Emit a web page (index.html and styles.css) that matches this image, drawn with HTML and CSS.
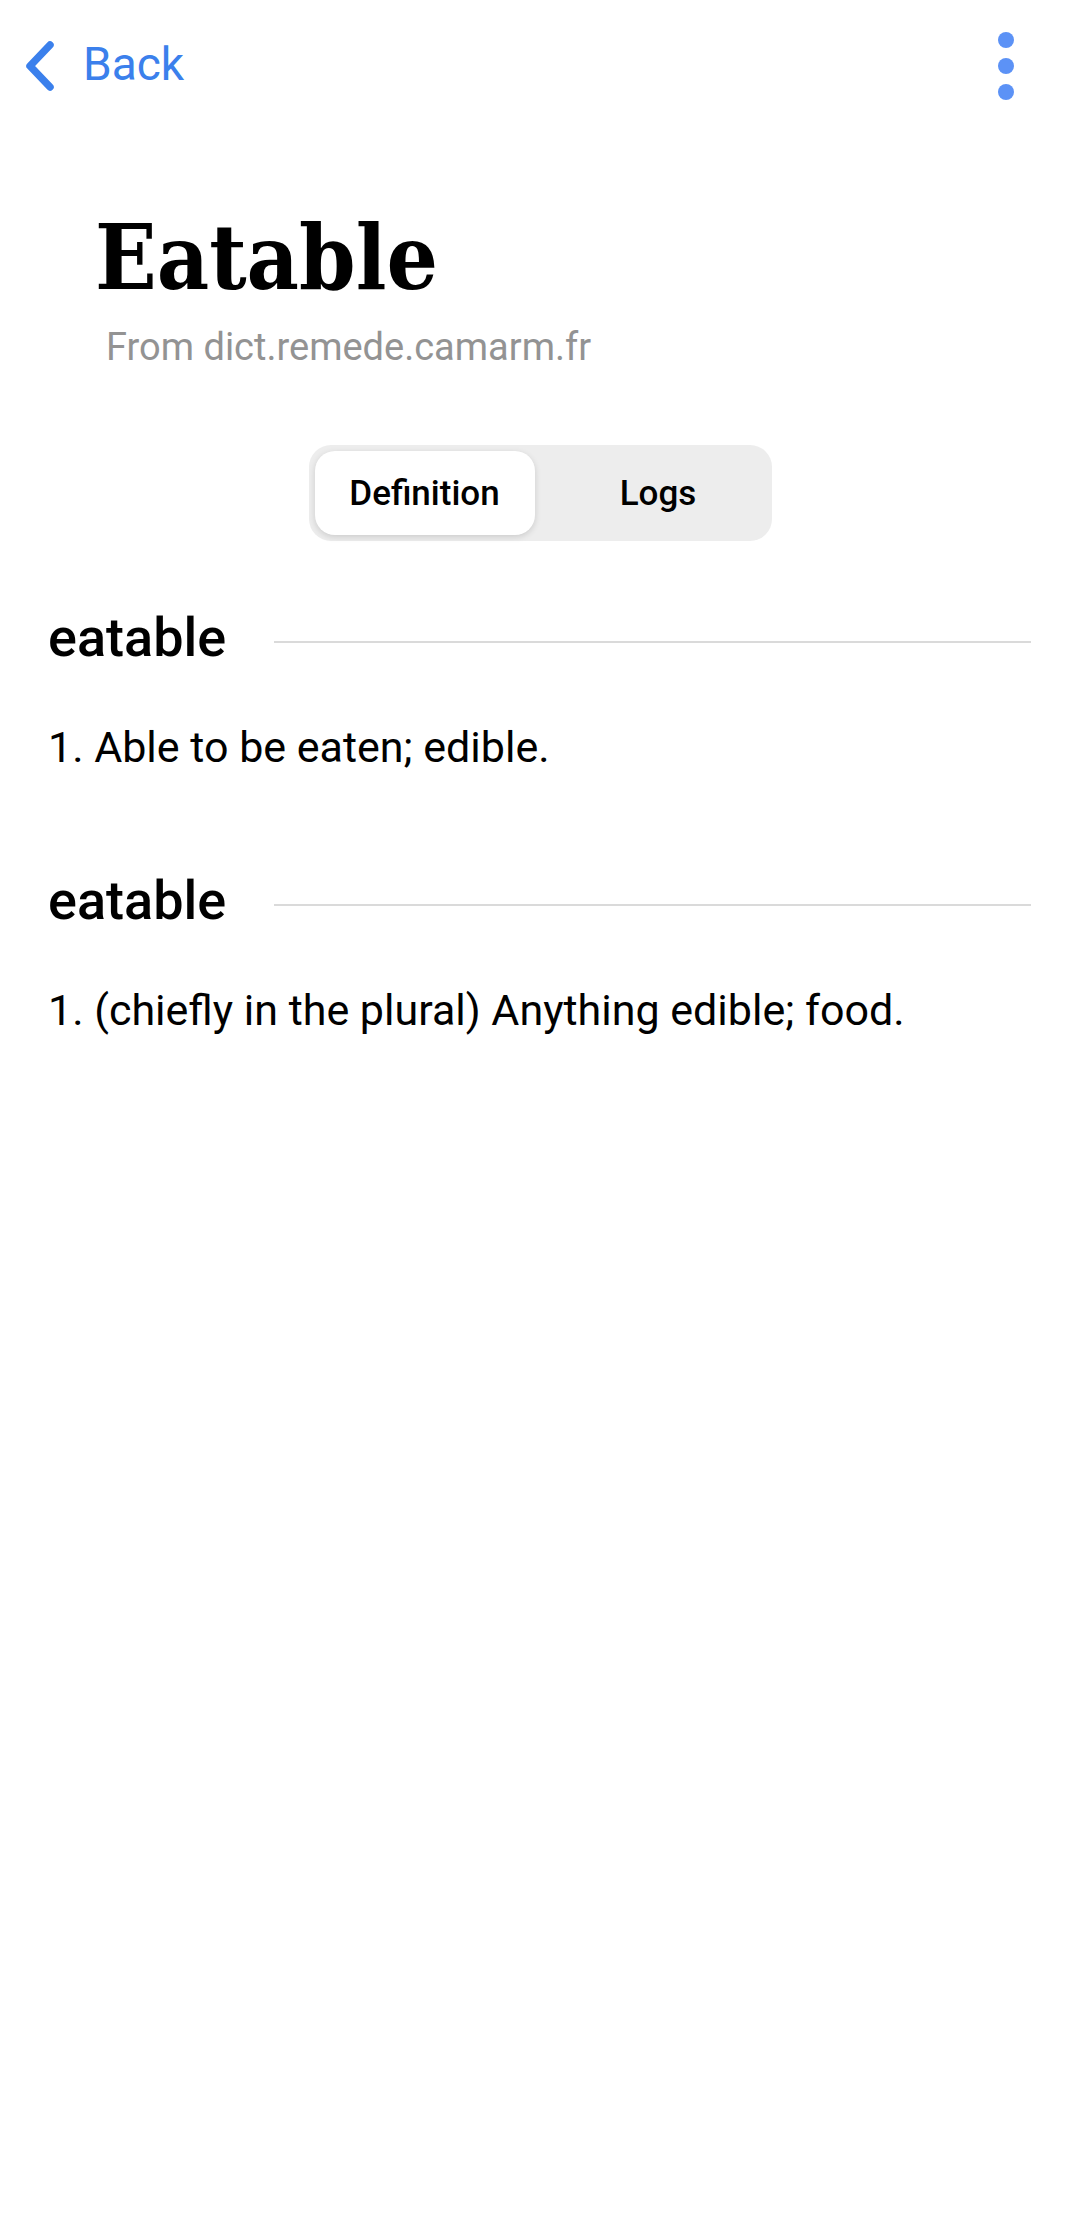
FILE: index.html
```html
<!DOCTYPE html>
<html lang="en">
<head>
<meta charset="utf-8">
<title>Eatable</title>
<link rel="stylesheet" href="styles.css">
</head>
<body>
<div class="app">
  <header class="topbar">
    <a class="back" href="#">
      <svg class="back-icon" width="40" height="66" viewBox="0 0 40 66" aria-hidden="true">
        <path d="M30 13 L10 34 L30 55" fill="none" stroke="#3b80ec" stroke-width="7.5" stroke-linecap="round" stroke-linejoin="round"/>
      </svg>
      <span class="back-label">Back</span>
    </a>
    <svg class="more" width="24" height="80" viewBox="0 0 24 80" aria-hidden="true">
      <circle cx="12" cy="15" r="8" fill="#5c92f6"/>
      <circle cx="12" cy="41" r="8" fill="#5c92f6"/>
      <circle cx="12" cy="67" r="8" fill="#5c92f6"/>
    </svg>
  </header>

  <h1 class="title">Eatable</h1>
  <p class="source">From dict.remede.camarm.fr</p>

  <div class="segmented-wrap">
    <div class="segmented">
      <div class="segment active">Definition</div>
      <div class="segment logs">Logs</div>
    </div>
  </div>

  <main class="content">
    <section class="entry">
      <div class="entry-head">
        <h2 class="headword">eatable</h2>
        <div class="rule"></div>
      </div>
      <p class="def">1. Able to be eaten; edible.</p>
    </section>
    <section class="entry second">
      <div class="entry-head">
        <h2 class="headword">eatable</h2>
        <div class="rule"></div>
      </div>
      <p class="def">1. (chiefly in the plural) Anything edible; food.</p>
    </section>
  </main>
</div>
</body>
</html>
```

FILE: styles.css
```css
html, body {
  margin: 0;
  padding: 0;
  background: #ffffff;
}

body {
  font-family: Roboto, "Noto Sans", sans-serif;
  color: #000000;
  width: 1080px;
  min-height: 2214px;
}

.topbar {
  height: 130px;
  display: flex;
  align-items: center;
  justify-content: space-between;
  padding: 0 62px 0 20px;
}

.back {
  display: flex;
  align-items: center;
  text-decoration: none;
  color: #3b80ec;
}

.back-icon {
  display: block;
}

.back-label {
  font-size: 46px;
  line-height: 1.172;
  margin-left: 23px;
}

.more {
  display: block;
}

.title {
  margin: 82px 0 0 0;
  padding-left: 95px;
  font-family: "DejaVu Serif Condensed", "DejaVu Serif", serif;
  font-stretch: semi-condensed;
  font-weight: 700;
  font-size: 90px;
  line-height: 1;
}

.source {
  margin: 26px 0 0 0;
  padding-left: 106px;
  font-size: 38px;
  line-height: 1;
  color: #939393;
}

.segmented-wrap {
  display: flex;
  justify-content: center;
  margin-top: 79px;
}

.segmented {
  width: 463px;
  height: 96px;
  box-sizing: border-box;
  padding: 6px;
  border-radius: 22px;
  background: #ededed;
  display: grid;
  grid-template-columns: 220px 1fr;
}

.segment {
  display: flex;
  align-items: center;
  justify-content: center;
  font-size: 35px;
  font-weight: 500;
  color: #000000;
}

.segment.active {
  background: #ffffff;
  border-radius: 20px;
  box-shadow: 0 2px 6px rgba(0, 0, 0, 0.14);
}

.segment.logs {
  padding-left: 16px;
}

.content {
  padding: 70px 49px 0 48px;
}

.entry-head {
  display: flex;
  align-items: center;
  gap: 48px;
}

.headword {
  margin: 0;
  font-size: 54px;
  font-weight: 500;
  line-height: 1;
}

.rule {
  flex: 1;
  height: 2px;
  margin-top: 8px;
  background: #dadada;
}

.def {
  margin: 61px 0 0 0;
  font-size: 43px;
  line-height: 1;
}

.entry.second {
  margin-top: 105px;
}
```
